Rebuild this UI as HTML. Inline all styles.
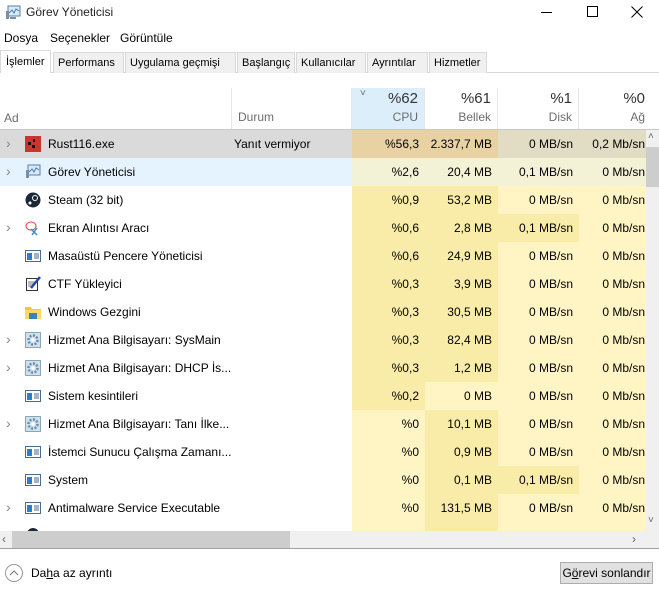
<!DOCTYPE html>
<html><head><meta charset="utf-8"><style>
*{box-sizing:border-box;margin:0;padding:0}
body{width:659px;height:597px;background:#fff;font-family:"Liberation Sans",sans-serif;font-size:12px;color:#000;position:relative;overflow:hidden}
.a{position:absolute;white-space:nowrap}
.row{position:absolute;left:0;width:646px;height:28px}
.c{position:absolute;top:0;height:28px;line-height:28px;text-align:right;padding-right:6px}
.L{background:#fff4c4}.D{background:#f9eca8}
.nm{position:absolute;left:48px;top:0;line-height:28px}
.ex{position:absolute;left:6px;top:0;line-height:27px;color:#888;font-size:14px}
.ic{position:absolute;left:25px;top:6px;width:16px;height:16px}
.tab{position:absolute;top:52px;height:21px;line-height:20px;border:1px solid #d9d9d9;border-bottom:none;background:#f0f0f0;padding:0 4px;font-size:11px;overflow:hidden}
.hd{position:absolute;top:88px;height:41px;border-right:1px solid #e5e5e5;text-align:right;padding-right:6px}
.hd b{display:block;font-weight:normal;font-size:15px;color:#333;margin-top:2px}
.hd span{display:block;color:#6d6d6d;margin-top:3px}
</style></head><body>
<svg class="a" style="left:5px;top:5px" width="16" height="16"><rect x="3" y="1" width="12" height="10" fill="#dce9f5" stroke="#5a7fa5"/><polyline points="4,8 7,5 9,8 11,4 14,6" fill="none" stroke="#3a7fc0"/><rect x="1" y="6" width="3" height="8" fill="#7a8ea6"/><rect x="5" y="12" width="6" height="2" fill="#7a8ea6"/></svg>
<div class="a" style="left:26px;top:5px;color:#222">Görev Yöneticisi</div>
<div class="a" style="left:541px;top:12px;width:11px;height:1px;background:#000"></div>
<div class="a" style="left:587px;top:6px;width:11px;height:11px;border:1px solid #000"></div>
<svg class="a" style="left:631px;top:6px" width="12" height="12"><path d="M0.5 0.5L11.5 11.5M11.5 0.5L0.5 11.5" stroke="#000"/></svg>
<div class="a" style="left:4px;top:31px">Dosya</div>
<div class="a" style="left:50px;top:31px">Seçenekler</div>
<div class="a" style="left:120px;top:31px">Görüntüle</div>
<div class="a" style="left:0;top:72px;width:659px;height:1px;background:#d9d9d9"></div>
<div class="tab" style="left:0;top:50px;height:23px;background:#fff;width:51px;padding-left:5px;line-height:22px">İşlemler</div>
<div class="tab" style="left:53px;width:71px">Performans</div>
<div class="tab" style="left:125px;width:111px">Uygulama geçmişi</div>
<div class="tab" style="left:237px;width:58px">Başlangıç</div>
<div class="tab" style="left:296px;width:70px">Kullanıcılar</div>
<div class="tab" style="left:367px;width:61px">Ayrıntılar</div>
<div class="tab" style="left:429px;width:58px">Hizmetler</div>
<div class="a" style="left:4px;top:111px;color:#6d6d6d">Ad</div>
<div class="hd" style="left:0;width:232px"></div>
<div class="hd" style="left:232px;width:120px;text-align:left;padding-left:6px"><span style="margin-top:22px">Durum</span></div>
<div class="hd" style="left:352px;width:73px;background:#dbeefa"><b>%62</b><span>CPU</span></div>
<div class="a" style="left:360px;top:88px;color:#6d6d6d;font-size:10px">˅</div>
<div class="hd" style="left:425px;width:73px"><b>%61</b><span>Bellek</span></div>
<div class="hd" style="left:498px;width:81px"><b>%1</b><span>Disk</span></div>
<div class="hd" style="left:579px;width:80px;border:none;padding-right:14px"><b>%0</b><span>Ağ</span></div>
<div class="a" style="left:0;top:129px;width:659px;height:1px;background:#c8c8c8"></div>

<div class="row" style="top:130px;background:#dadada"><span class="ex">›</span><svg class="ic" viewBox="0 0 16 16"><rect width="16" height="16" fill="#c8372d"/><rect x="3" y="6" width="3" height="3" fill="#111"/><rect x="7" y="9" width="3" height="3" fill="#111"/><rect x="8" y="3" width="2" height="3" fill="#111"/></svg><span class="nm">Rust116.exe</span><span class="a" style="left:234px;line-height:28px">Yanıt vermiyor</span>
<div class="c" style="left:352px;width:73px;background:#e8d2a4">%56,3</div><div class="c" style="left:425px;width:73px;background:#e8d2a4">2.337,7 MB</div><div class="c" style="left:498px;width:81px;background:#e2dcc4">0 MB/sn</div><div class="c" style="left:579px;width:67px;background:#e2dcc4;padding-right:1px">0,2 Mb/sn</div></div>
<div class="row" style="top:158px;background:#e5f3ff"><span class="ex">›</span><svg class="ic" viewBox="0 0 16 16"><rect x="3" y="1" width="12" height="10" fill="#dce9f5" stroke="#5a7fa5"/><polyline points="4,8 7,5 9,8 11,4 14,6" fill="none" stroke="#3a7fc0"/><rect x="1" y="6" width="3" height="8" fill="#7a8ea6"/></svg><span class="nm">Görev Yöneticisi</span>
<div class="c" style="left:352px;width:73px;background:#f3f1d6">%2,6</div><div class="c" style="left:425px;width:73px;background:#f3f1d6">20,4 MB</div><div class="c" style="left:498px;width:81px;background:#f3f1d6">0,1 MB/sn</div><div class="c" style="left:579px;width:67px;background:#f3f1d6;padding-right:1px">0 Mb/sn</div></div>
<div id="rows"></div>
<script>
var R=[
["Steam (32 bit)",0,"st","%0,9","53,2 MB","0 MB/sn",1,1,0],
["Ekran Alıntısı Aracı",1,"sn","%0,6","2,8 MB","0,1 MB/sn",1,1,1],
["Masaüstü Pencere Yöneticisi",0,"w","%0,6","24,9 MB","0 MB/sn",1,1,0],
["CTF Yükleyici",0,"ctf","%0,3","3,9 MB","0 MB/sn",1,1,0],
["Windows Gezgini",0,"f","%0,3","30,5 MB","0 MB/sn",1,1,0],
["Hizmet Ana Bilgisayarı: SysMain",1,"g","%0,3","82,4 MB","0 MB/sn",1,1,0],
["Hizmet Ana Bilgisayarı: DHCP İs...",1,"g","%0,3","1,2 MB","0 MB/sn",1,1,0],
["Sistem kesintileri",0,"w","%0,2","0 MB","0 MB/sn",1,0,0],
["Hizmet Ana Bilgisayarı: Tanı İlke...",1,"g","%0","10,1 MB","0 MB/sn",0,1,0],
["İstemci Sunucu Çalışma Zamanı...",0,"w","%0","0,9 MB","0 MB/sn",0,1,0],
["System",0,"w","%0","0,1 MB","0,1 MB/sn",0,1,1],
["Antimalware Service Executable",1,"w","%0","131,5 MB","0 MB/sn",0,1,0]];
var I={st:'<circle cx="8" cy="8" r="7.5" fill="#1b2838"/><circle cx="10" cy="6" r="2.5" fill="none" stroke="#fff"/><circle cx="5" cy="11" r="1.5" fill="#fff"/>',
sn:'<ellipse cx="6" cy="6" rx="5" ry="4" fill="none" stroke="#d44"/><path d="M6 9L12 15M12 8L7 15" stroke="#3a8cc8" stroke-width="1.5"/>',
w:'<rect x="0.5" y="2.5" width="15" height="11" fill="#fff" stroke="#4a6a90"/><rect x="2" y="5" width="5" height="7" fill="#2f7bd0"/><path d="M9 6h5M9 8h5M9 10h5" stroke="#4a6a90"/>',
ctf:'<rect x="1.5" y="2.5" width="11" height="12" fill="#fff" stroke="#333"/><path d="M3 6h7M3 8h7M3 10h5" stroke="#777"/><path d="M6 12L15 1" stroke="#2246a8" stroke-width="2.5"/>',
f:'<path d="M0 3h6l1 2h9v10H0z" fill="#f4c542"/><rect x="0" y="6" width="16" height="9" fill="#ffd766"/><rect x="4" y="9" width="8" height="6" fill="#3a7fc0"/>',
g:'<rect x="0.5" y="0.5" width="15" height="15" fill="#cfe0f0" stroke="#8aa"/><circle cx="8" cy="8" r="4.5" fill="none" stroke="#6a8aaa" stroke-width="2.5" stroke-dasharray="2 1.5"/><circle cx="8" cy="8" r="1.8" fill="#fff"/>'};
var h="";R.forEach(function(r,i){var t=186+i*28;
h+='<div class="row" style="top:'+t+'px">'+(r[1]?'<span class="ex">›</span>':'')+'<svg class="ic" viewBox="0 0 16 16">'+I[r[2]]+'</svg><span class="nm">'+r[0]+'</span>'+
'<div class="c '+(r[6]?'D':'L')+'" style="left:352px;width:73px">'+r[3]+'</div>'+
'<div class="c '+(r[7]?'D':'L')+'" style="left:425px;width:73px">'+r[4]+'</div>'+
'<div class="c '+(r[8]?'D':'L')+'" style="left:498px;width:81px">'+r[5]+'</div>'+
'<div class="c L" style="left:579px;width:67px;padding-right:1px">0 Mb/sn</div></div>';});
h+='<div class="row" style="top:522px;height:9px;overflow:hidden"><div class="c L" style="left:352px;width:73px"></div><div class="c D" style="left:425px;width:73px"></div><div class="c L" style="left:498px;width:81px"></div><div class="c L" style="left:579px;width:67px"></div><div class="a" style="left:27px;top:6px;width:12px;height:12px;border-radius:6px;background:#1b2838"></div></div>';
document.getElementById("rows").outerHTML=h;
</script>
<div class="a" style="left:646px;top:130px;width:13px;height:401px;background:#f0f0f0"></div>
<div class="a" style="left:646px;top:147px;width:13px;height:40px;background:#cdcdcd"></div>
<div class="a" style="left:648px;top:131px;font-size:10px;color:#666">˄</div>
<div class="a" style="left:648px;top:515px;font-size:10px;color:#666">˅</div>
<div class="a" style="left:0;top:531px;width:659px;height:17px;background:#f0f0f0"></div>
<div class="a" style="left:12px;top:531px;width:278px;height:17px;background:#cdcdcd"></div>
<div class="a" style="left:2px;top:532px;color:#666">‹</div>
<div class="a" style="left:632px;top:532px;color:#666">›</div>
<div class="a" style="left:0;top:548px;width:659px;height:1px;background:#a0a0a0"></div>
<div class="a" style="left:5px;top:564px;width:18px;height:18px;border:1px solid #999;border-radius:50%"></div>
<svg class="a" style="left:9px;top:569px" width="10" height="8"><path d="M1 6L5 2L9 6" fill="none" stroke="#777"/></svg>
<div class="a" style="left:31px;top:566px">Da<u>h</u>a az ayrıntı</div>
<div class="a" style="left:560px;top:562px;width:93px;height:22px;border:1px solid #adadad;background:#e1e1e1;text-align:center;line-height:20px">G<u>ö</u>revi sonlandır</div>
</body></html>
